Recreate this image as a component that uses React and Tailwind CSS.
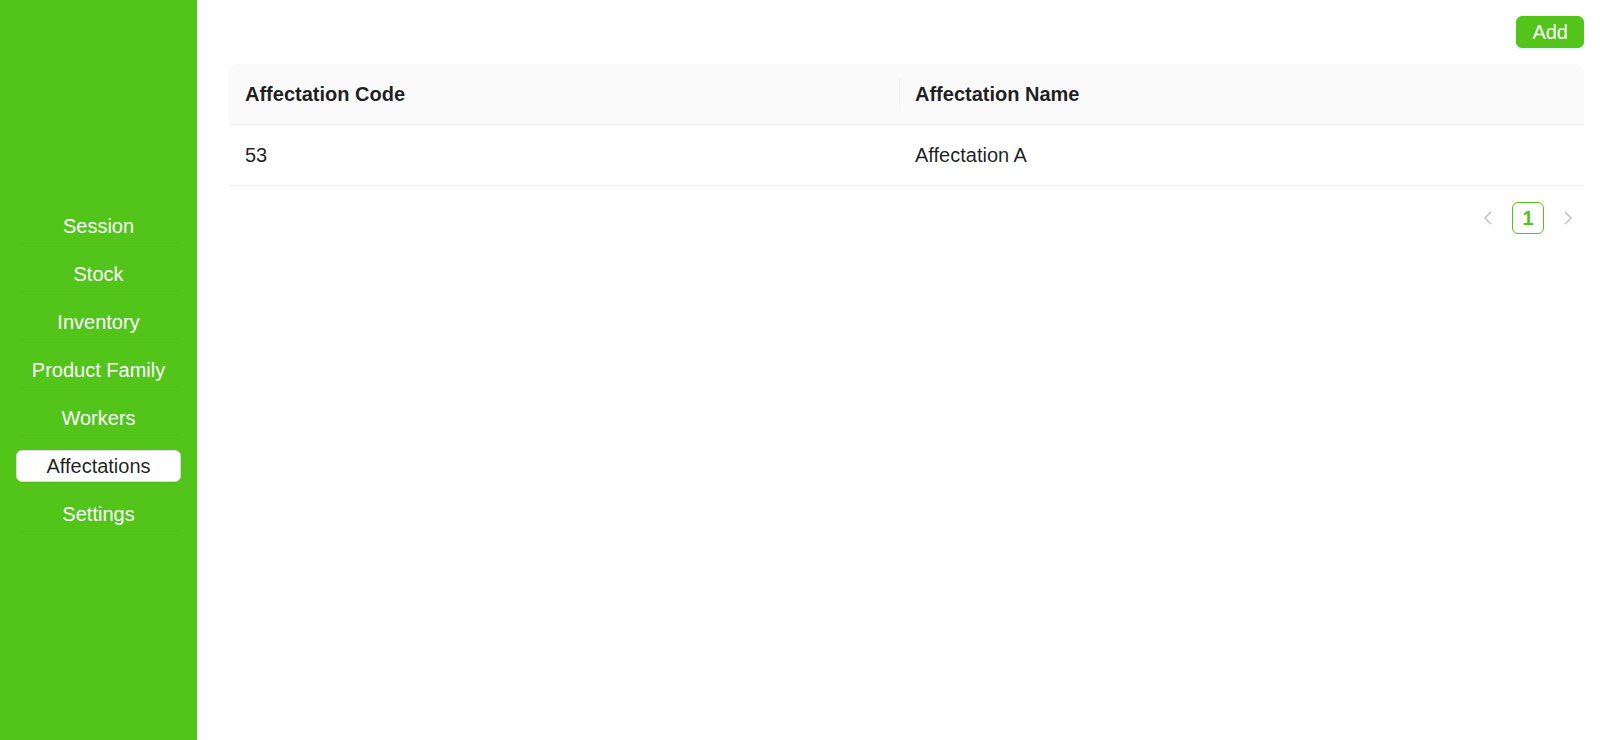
import React from "react";

const items = ["Session", "Stock", "Inventory", "Product Family", "Workers", "Affectations", "Settings"];

export default function App() {
  return (
    <div className="flex h-[740px] w-[1600px] bg-white" style={{ fontFamily: '"Liberation Sans", Arial, sans-serif' }}>
      <aside className="flex h-full w-[197px] shrink-0 flex-col justify-center gap-4 bg-[#52c41a] px-4">
        {items.map((it) => (
          <div
            key={it}
            className={
              it === "Affectations"
                ? "flex h-8 items-center justify-center rounded-md border border-[#d9d9d9] bg-white text-[20px] text-[rgba(0,0,0,0.88)] shadow-[0_2px_0_rgba(0,0,0,0.02)]"
                : "flex h-8 items-center justify-center rounded-md border border-transparent text-[20px] text-white shadow-[0_2px_0_rgba(0,0,0,0.02)]"
            }
          >
            {it}
          </div>
        ))}
      </aside>
      <main className="flex flex-1 flex-col pl-8 pr-4 pt-4">
        <div className="flex justify-end">
          <button className="h-8 rounded-md border border-[#52c41a] bg-[#52c41a] px-[15px] text-[20px] leading-none text-white shadow-[0_2px_0_rgba(5,145,255,0.1)]">
            Add
          </button>
        </div>
        <div className="mt-4 overflow-hidden rounded-t-lg">
          <div className="flex h-[61px] border-b border-[#f0f0f0] bg-[#fafafa] text-[20px] font-bold text-[rgba(0,0,0,0.88)]">
            <div className="flex w-[670px] items-center px-4">Affectation Code</div>
            <div className="relative flex flex-1 items-center px-4">
              <span className="absolute left-0 top-1/2 h-8 w-px -translate-y-1/2 bg-[#f0f0f0]"></span>
              Affectation Name
            </div>
          </div>
          <div className="flex h-[61px] border-b border-[#f0f0f0] text-[20px] text-[rgba(0,0,0,0.88)]">
            <div className="flex w-[670px] items-center px-4">53</div>
            <div className="flex flex-1 items-center px-4">Affectation A</div>
          </div>
        </div>
        <div className="mt-4 flex justify-end gap-2">
          <div className="flex h-8 w-8 items-center justify-center">
            <svg width="10" height="14" viewBox="0 0 10 14" fill="none">
              <path d="M8 1 L2 7 L8 13" stroke="rgba(0,0,0,0.25)" strokeWidth="1.5" />
            </svg>
          </div>
          <div className="flex h-8 w-8 items-center justify-center rounded-md border border-[#52c41a] text-[20px] font-bold text-[#52c41a]">
            1
          </div>
          <div className="flex h-8 w-8 items-center justify-center">
            <svg width="10" height="14" viewBox="0 0 10 14" fill="none">
              <path d="M2 1 L8 7 L2 13" stroke="rgba(0,0,0,0.25)" strokeWidth="1.5" />
            </svg>
          </div>
        </div>
      </main>
    </div>
  );
}
